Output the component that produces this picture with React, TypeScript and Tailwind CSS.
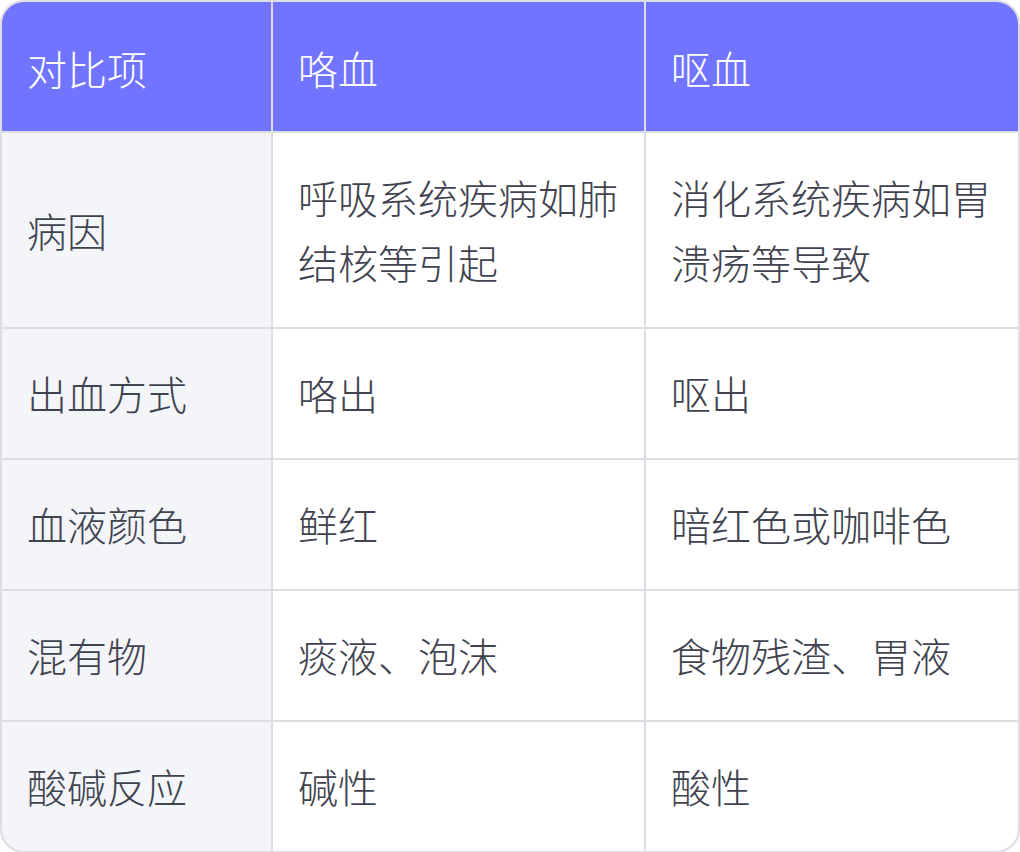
const rows: [string, string, string][] = [
  ["病因", "呼吸系统疾病如肺结核等引起", "消化系统疾病如胃溃疡等导致"],
  ["出血方式", "咯出", "呕出"],
  ["血液颜色", "鲜红", "暗红色或咖啡色"],
  ["混有物", "痰液、泡沫", "食物残渣、胃液"],
  ["酸碱反应", "碱性", "酸性"],
]

function App() {
  return (
    <div
      className="w-[1020px] h-[852px] bg-white"
      style={{ fontFamily: '"Noto Sans CJK SC", "Noto Sans", sans-serif' }}
    >
      <div className="grid grid-cols-[269px_371px_1fr] gap-[2px] bg-[#dddee3] border-2 border-[#dddee3] rounded-[24px] overflow-hidden text-[40px] leading-[65px] font-light">
        <div className="flex items-center bg-[#7174ff] px-[25px] pt-[34px] pb-[30px] text-white">对比项</div>
        <div className="flex items-center bg-[#7174ff] px-[25px] pt-[34px] pb-[30px] text-white">咯血</div>
        <div className="flex items-center bg-[#7174ff] px-[25px] pt-[34px] pb-[30px] text-white">呕血</div>

        {rows.map((row) => (
          <>
            <div key={row[0]} className="flex items-center bg-[#f4f5f9] px-[25px] py-[32px] text-[#3f4350]">
              {row[0]}
            </div>
            <div className="flex items-center bg-white px-[25px] py-[32px] text-[#3f4350]">{row[1]}</div>
            <div className="flex items-center bg-white px-[25px] py-[32px] text-[#3f4350]">{row[2]}</div>
          </>
        ))}
      </div>
    </div>
  )
}

export default App
